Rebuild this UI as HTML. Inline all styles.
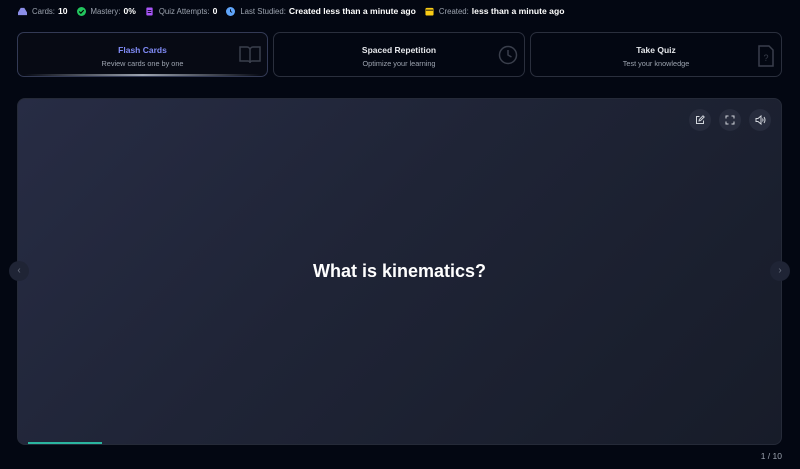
<!DOCTYPE html>
<html><head><style>
*{margin:0;padding:0;box-sizing:border-box}
body{width:800px;height:469px;background:#030712;font-family:"Liberation Sans",sans-serif;color:#9ca3af;overflow:hidden;position:relative}
.stats{position:absolute;top:5px;left:18px;font-size:7.8px;display:flex;gap:9px;align-items:center;height:12px}
.stats span{display:flex;align-items:center;white-space:nowrap}
.stats svg{margin-right:5px}
.stats b{color:#fff;font-size:8.6px;margin-left:3px}
.ic{width:9px;height:9px;display:inline-block}
.tab{position:absolute;top:32px;height:45px;border:1px solid #2a2f3d;border-radius:7px;text-align:center;overflow:hidden}
.tab .t{font-size:8.5px;font-weight:bold;color:#e5e7eb;margin-top:12px}
.tab .s{font-size:7.3px;color:#9ca3af;margin-top:4px}
.tab svg{position:absolute;right:6px;top:12px}
.card{position:absolute;left:17px;top:98px;width:765px;height:347px;border-radius:8px;background:linear-gradient(135deg,#272c44 0%,#1f2436 45%,#171c29 100%);border:1px solid #252a38}
.q{position:absolute;left:0;right:0;top:162px;text-align:center;color:#fff;font-size:18px;font-weight:bold}
.btn{position:absolute;top:10px;width:22px;height:22px;border-radius:50%;background:#272c3d;display:flex;align-items:center;justify-content:center}
.arrow{position:absolute;top:261px;width:20px;height:20px;border-radius:50%;background:#1f2435;color:#6b7280;font-size:10px;text-align:center;line-height:20px}
</style></head><body>
<div class="stats">
<span><svg class="ic" viewBox="0 0 10 10"><path d="M3 1h4l3 5v3H0V6z" fill="#8b8ee8"/></svg>Cards:<b>10</b></span>
<span><svg class="ic" viewBox="0 0 10 10"><circle cx="5" cy="5" r="5" fill="#22c55e"/><path d="M2.5 5l1.8 1.8L7.5 3.5" stroke="#000" stroke-width="1.3" fill="none"/></svg>Mastery:<b>0%</b></span>
<span><svg class="ic" viewBox="0 0 10 10"><rect x="1.5" y="0.5" width="7" height="9" rx="1" fill="#a855f7"/><path d="M3 4h4M3 6h4" stroke="#030712"/></svg>Quiz Attempts:<b>0</b></span>
<span><svg class="ic" viewBox="0 0 10 10"><circle cx="5" cy="5" r="5" fill="#60a5fa"/><path d="M5 2.5V5l1.8 1" stroke="#030712" fill="none"/></svg>Last Studied:<b>Created less than a minute ago</b></span>
<span><svg class="ic" viewBox="0 0 10 10"><rect x="0.5" y="1" width="9" height="8.5" rx="1.5" fill="#facc15"/><path d="M1 3.5h8" stroke="#030712"/></svg>Created:<b>less than a minute ago</b></span>
</div>
<div class="tab" style="left:17px;width:251px;border-color:#333a55;background:#070a14">
<div class="t" style="color:#818cf8">Flash Cards</div><div class="s">Review cards one by one</div>
<svg width="22" height="20" viewBox="0 0 22 20"><path d="M1 2h7a3 3 0 0 1 3 3v13a2 2 0 0 0-2-2H1zM21 2h-7a3 3 0 0 0-3 3v13a2 2 0 0 1 2-2h8z" stroke="#3a3f4c" stroke-width="1.5" fill="none"/></svg>
<div style="position:absolute;bottom:0;left:6px;right:6px;height:2px;background:linear-gradient(90deg,transparent,#9ca3af,transparent)"></div>
</div>
<div class="tab" style="left:273px;width:252px">
<div class="t">Spaced Repetition</div><div class="s">Optimize your learning</div>
<svg width="20" height="20" viewBox="0 0 20 20"><circle cx="10" cy="10" r="8.5" stroke="#3a3f4c" stroke-width="1.5" fill="none"/><path d="M10 5v5l3.5 2" stroke="#3a3f4c" stroke-width="1.5" fill="none"/></svg>
</div>
<div class="tab" style="left:530px;width:252px">
<div class="t">Take Quiz</div><div class="s">Test your knowledge</div>
<svg width="18" height="22" viewBox="0 0 18 22"><path d="M2 1h10l4 4v16H2z" stroke="#3a3f4c" stroke-width="1.5" fill="none"/><text x="9" y="16" font-size="9" fill="#3a3f4c" text-anchor="middle" font-family="Liberation Sans">?</text></svg>
</div>
<div class="card">
<div class="btn" style="left:671px"><svg width="10" height="10" viewBox="0 0 10 10"><path d="M4.5 1.5H1.5v7h7V5.5M4 6l.4-1.6L8 .8l1.2 1.2L5.6 5.6z" stroke="#d1d5db" fill="none"/></svg></div>
<div class="btn" style="left:701px"><svg width="10" height="10" viewBox="0 0 10 10"><path d="M1 3.5V1h2.5M6.5 1H9v2.5M9 6.5V9H6.5M3.5 9H1V6.5" stroke="#d1d5db" fill="none"/></svg></div>
<div class="btn" style="left:731px"><svg width="11" height="10" viewBox="0 0 11 10"><path d="M1 3.5h2l3-2.5v8L3 6.5H1z" stroke="#d1d5db" fill="none"/><path d="M7.5 3.5q1 1.5 0 3M9 2q2 3 0 6" stroke="#d1d5db" fill="none"/></svg></div>
<div class="q">What is kinematics?</div>
<div style="position:absolute;left:10px;bottom:0;width:74px;height:2px;background:#2bb5a0"></div>
</div>
<div class="arrow" style="left:9px">‹</div>
<div class="arrow" style="left:770px">›</div>
<div style="position:absolute;right:18px;top:451px;font-size:8.5px;color:#9ca3af">1 / 10</div>
</body></html>
